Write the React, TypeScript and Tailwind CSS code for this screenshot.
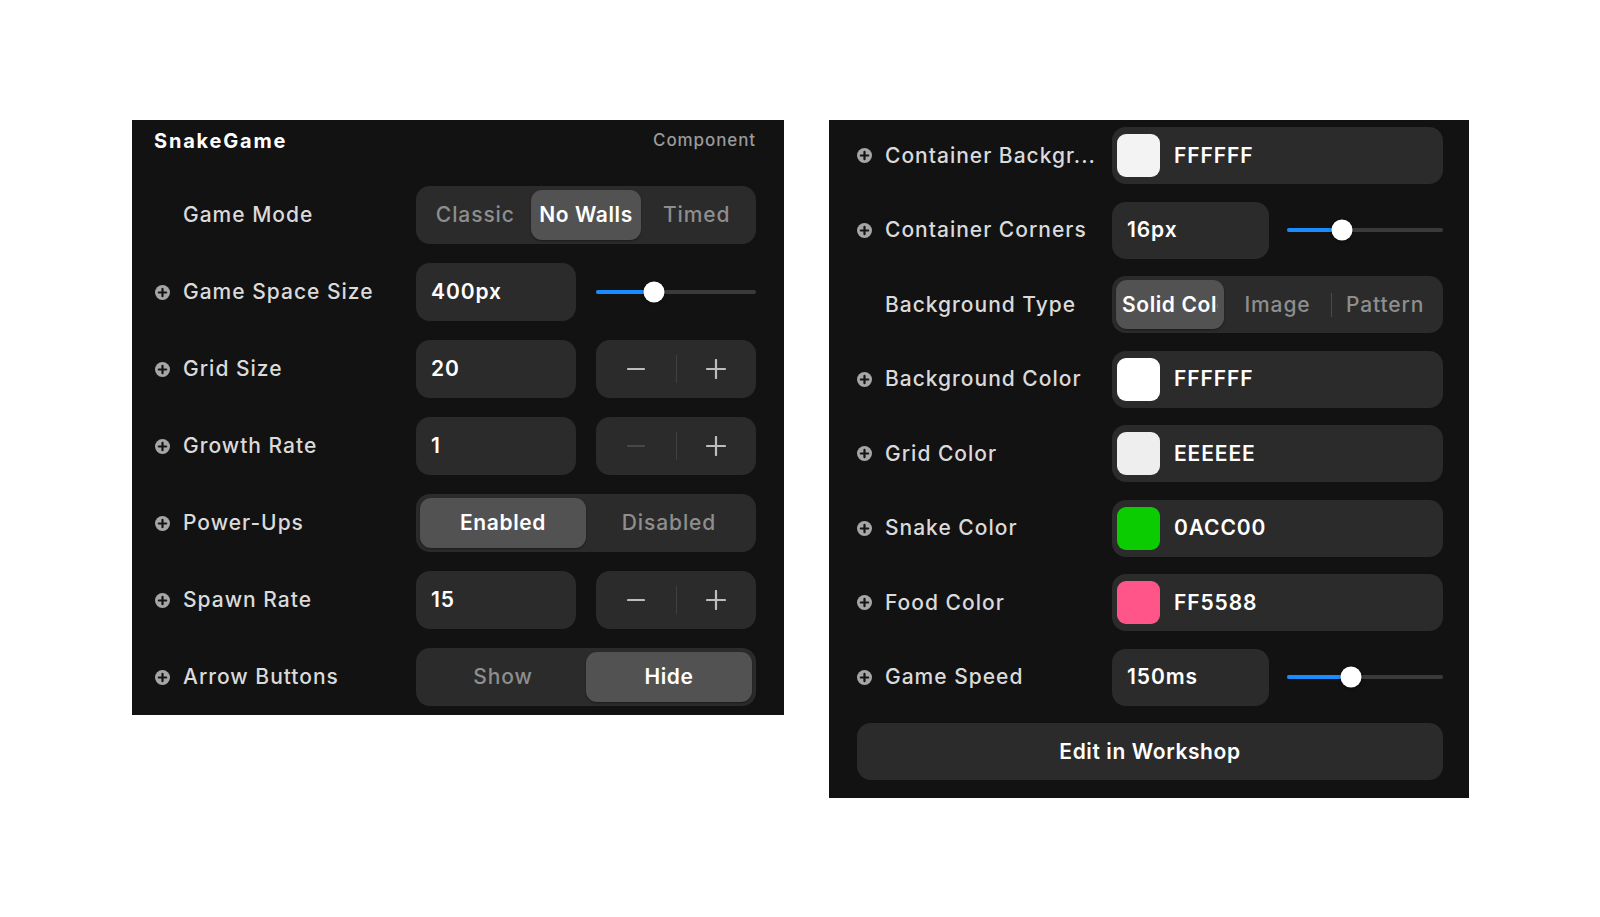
import React from "react";

function PlusCircle() {
  return (
    <svg width="15" height="15" viewBox="0 0 15 15" className="shrink-0">
      <circle cx="7.5" cy="7.5" r="7.5" fill="#a6a6a6" />
      <path d="M7.5 3.8v7.4M3.8 7.5h7.4" stroke="#141414" strokeWidth="2.2" strokeLinecap="round" />
    </svg>
  );
}

function Label({ icon, text, width }: { icon: boolean; text: string; width: string }) {
  return (
    <div className={`flex shrink-0 items-center gap-[13px] ${width}`}>
      <span className="flex w-[15px] shrink-0">{icon && <PlusCircle />}</span>
      <span className="whitespace-nowrap text-[21px] font-medium tracking-[1px] text-[#dadada]">{text}</span>
    </div>
  );
}

function Segmented({ options, selected }: { options: string[]; selected: number }) {
  return (
    <div className="flex h-full w-full rounded-[14px] bg-[#2b2b2b] p-[4px]">
      {options.map((o, i) => {
        const sel = i === selected;
        const div = i > 0 && i !== selected && i - 1 !== selected;
        return (
          <div key={o} className="relative flex-1 min-w-0">
            {div && <span className="absolute left-0 top-1/2 h-[24px] w-px -translate-y-1/2 bg-[#4a4a4a]" />}
            <div
              className={
                sel
                  ? "flex h-full items-center overflow-hidden rounded-[11px] bg-[#525252] px-[6px] shadow-[0_1px_2px_rgba(0,0,0,0.4)]"
                  : "flex h-full items-center overflow-hidden px-[6px]"
              }
            >
              <span
                className={
                  sel
                    ? "block w-full overflow-hidden whitespace-nowrap text-center text-[21px] font-semibold tracking-[0.6px] text-white"
                    : "block w-full overflow-hidden whitespace-nowrap text-center text-[21px] font-medium tracking-[0.9px] text-[#8e8e8e]"
                }
              >
                {o}
              </span>
            </div>
          </div>
        );
      })}
    </div>
  );
}

function ValueBox({ value, width }: { value: string; width: string }) {
  return (
    <div className={`flex h-full shrink-0 items-center rounded-[14px] bg-[#2b2b2b] px-[15px] ${width}`}>
      <span className="text-[21px] font-semibold tracking-[0.9px] text-white">{value}</span>
    </div>
  );
}

function Stepper({ minusDisabled }: { minusDisabled?: boolean }) {
  return (
    <div className="flex h-full flex-1 items-center rounded-[14px] bg-[#2b2b2b]">
      <div className="flex flex-1 justify-center">
        <svg width="18" height="18" viewBox="0 0 18 18">
          <path d="M1 9h16" stroke={minusDisabled ? "#474747" : "#bdbdbd"} strokeWidth="2.2" strokeLinecap="round" />
        </svg>
      </div>
      <div className="h-[28px] w-px bg-[#404040]" />
      <div className="flex flex-1 justify-center">
        <svg width="20" height="20" viewBox="0 0 20 20">
          <path d="M10 1v18M1 10h18" stroke="#bdbdbd" strokeWidth="2.2" strokeLinecap="round" />
        </svg>
      </div>
    </div>
  );
}

function Slider({ frac }: { frac: number }) {
  return (
    <div className="relative flex h-full flex-1 items-center">
      <div className="h-[4px] w-full rounded-full bg-[#3a3a3a]" />
      <div className="absolute left-0 top-1/2 h-[4px] -translate-y-1/2 rounded-full bg-[#1a8cff]" style={{ width: `${frac * 100}%` }} />
      <div
        className="absolute top-1/2 h-[21px] w-[21px] -translate-x-1/2 -translate-y-1/2 rounded-full bg-white shadow-[0_1px_3px_rgba(0,0,0,0.5)]"
        style={{ left: `${frac * 100}%` }}
      />
    </div>
  );
}

function ColorBox({ color, value }: { color: string; value: string }) {
  return (
    <div className="flex h-full w-full items-center rounded-[14px] bg-[#2b2b2b] pl-[5px]">
      <div className="h-[43px] w-[43px] rounded-[9px]" style={{ backgroundColor: color }} />
      <span className="ml-[14px] text-[21px] font-semibold tracking-[0.9px] text-white">{value}</span>
    </div>
  );
}

function LRow({ icon, label, children }: { icon: boolean; label: string; children: React.ReactNode }) {
  return (
    <div className="flex h-[58px] items-center">
      <Label icon={icon} text={label} width="w-[261px]" />
      <div className="flex h-full w-[340px] gap-[20px]">{children}</div>
    </div>
  );
}

function RRow({ icon, label, children }: { icon: boolean; label: string; children: React.ReactNode }) {
  return (
    <div className="flex h-[57px] items-center">
      <Label icon={icon} text={label} width="w-[255px]" />
      <div className="flex h-full w-[331px] gap-[18px]">{children}</div>
    </div>
  );
}

export default function App() {
  return (
    <div className="min-h-[917px] w-[1600px] bg-white font-['Inter',sans-serif]">
      <div className="flex items-start gap-[45px] pl-[132px] pt-[120px]">
        {/* Left panel */}
        <div className="w-[652px] bg-[#121212] pb-[9px] pl-[23px] pr-[28px]">
          <div className="-ml-[1px] flex h-[42px] items-center justify-between">
            <span className="text-[20px] font-bold tracking-[1.8px] text-white">SnakeGame</span>
            <span className="text-[17px] font-medium tracking-[0.9px] text-[#9a9a9a]">Component</span>
          </div>
          <div className="mt-[24px] flex flex-col gap-[19px]">
            <LRow icon={false} label="Game Mode">
              <Segmented options={["Classic", "No Walls", "Timed"]} selected={1} />
            </LRow>
            <LRow icon label="Game Space Size">
              <ValueBox value="400px" width="w-[160px]" />
              <Slider frac={0.36} />
            </LRow>
            <LRow icon label="Grid Size">
              <ValueBox value="20" width="w-[160px]" />
              <Stepper />
            </LRow>
            <LRow icon label="Growth Rate">
              <ValueBox value="1" width="w-[160px]" />
              <Stepper minusDisabled />
            </LRow>
            <LRow icon label="Power-Ups">
              <Segmented options={["Enabled", "Disabled"]} selected={0} />
            </LRow>
            <LRow icon label="Spawn Rate">
              <ValueBox value="15" width="w-[160px]" />
              <Stepper />
            </LRow>
            <LRow icon label="Arrow Buttons">
              <Segmented options={["Show", "Hide"]} selected={1} />
            </LRow>
          </div>
        </div>

        {/* Right panel */}
        <div className="w-[640px] bg-[#121212] pb-[18px] pl-[28px] pr-[26px] pt-[7px]">
          <div className="flex flex-col gap-[17.5px]">
            <RRow icon label="Container Backgr...">
              <ColorBox color="#f3f3f3" value="FFFFFF" />
            </RRow>
            <RRow icon label="Container Corners">
              <ValueBox value="16px" width="w-[157px]" />
              <Slider frac={0.35} />
            </RRow>
            <RRow icon={false} label="Background Type">
              <Segmented options={["Solid Color", "Image", "Pattern"]} selected={0} />
            </RRow>
            <RRow icon label="Background Color">
              <ColorBox color="#ffffff" value="FFFFFF" />
            </RRow>
            <RRow icon label="Grid Color">
              <ColorBox color="#eeeeee" value="EEEEEE" />
            </RRow>
            <RRow icon label="Snake Color">
              <ColorBox color="#0acc00" value="0ACC00" />
            </RRow>
            <RRow icon label="Food Color">
              <ColorBox color="#ff5588" value="FF5588" />
            </RRow>
            <RRow icon label="Game Speed">
              <ValueBox value="150ms" width="w-[157px]" />
              <Slider frac={0.41} />
            </RRow>
            <button className="flex h-[57px] w-[586px] items-center justify-center rounded-[14px] bg-[#2b2b2b]">
              <span className="text-[21px] font-semibold tracking-[0.6px] text-white">Edit in Workshop</span>
            </button>
          </div>
        </div>
      </div>
    </div>
  );
}
